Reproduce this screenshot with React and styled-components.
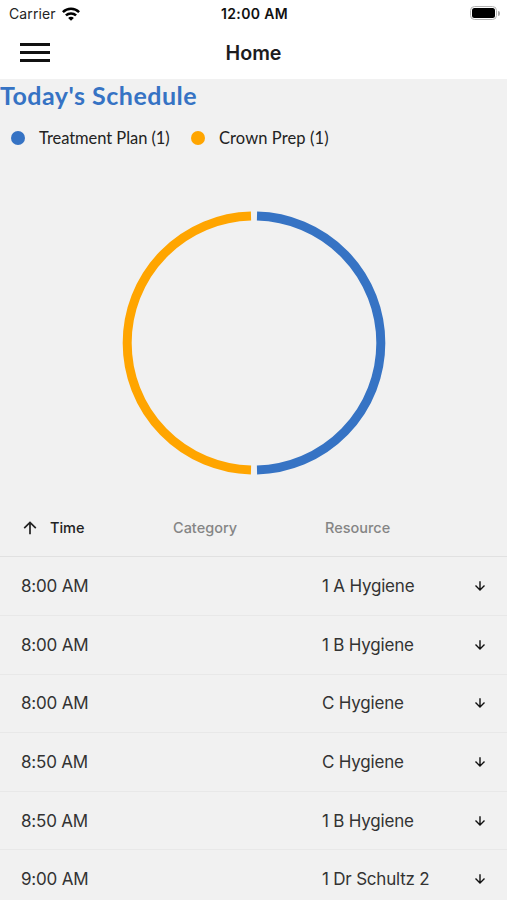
import styled, { createGlobalStyle } from "styled-components";

const appointments = [
    { id: 1, time: "8:00 AM", resource: "1 A Hygiene" },
    { id: 2, time: "8:00 AM", resource: "1 B Hygiene" },
    { id: 3, time: "8:00 AM", resource: "C Hygiene" },
    { id: 4, time: "8:50 AM", resource: "C Hygiene" },
    { id: 5, time: "8:50 AM", resource: "1 B Hygiene" },
    { id: 6, time: "9:00 AM", resource: "1 Dr Schultz 2" },
];

const WifiIcon = () => (
    <svg width="18" height="14" viewBox="0 0 18 14" fill="none" stroke="#000" strokeWidth="2.5">
        <path d="M0.9 5.1C5.4 0.7 12.6 0.7 17.1 5.1" />
        <path d="M3.9 8.4C6.7 5.7 11.3 5.7 14.1 8.4" />
        <path d="M6.1 10.9C7.7 9.3 10.3 9.3 11.9 10.9L9 13.8Z" fill="#000" stroke="none" />
    </svg>
);

const ArrowUp = () => (
    <svg width="14" height="14" viewBox="0 0 14 14" fill="none" stroke="#222" strokeWidth="1.7">
        <path d="M7 13.2V1.6M1.2 7.2L7 1.4L12.8 7.2" />
    </svg>
);

const ArrowDown = () => (
    <svg width="10" height="10" viewBox="0 0 10 10" fill="none" stroke="#111" strokeWidth="1.4">
        <path d="M5 0.3V8.7M0.5 4.6L5 9L9.5 4.6" />
    </svg>
);

const Chart = () => (
    <svg width="264" height="264" viewBox="0 0 264 264" fill="none" strokeWidth="9">
        <path d="M135 5.04A127 127 0 0 1 135 258.96" stroke="#3673c4" />
        <path d="M129 5.04A127 127 0 0 0 129 258.96" stroke="#ffa500" />
    </svg>
);

const App = () => {
    return (
        <Screen>
            <GlobalStyle />
            <StatusBar>
                <Carrier>
                    <CarrierName>Carrier</CarrierName>
                    <WifiIcon />
                </Carrier>
                <Clock>12:00 AM</Clock>
                <BatteryBox>
                    <Battery />
                    <BatteryTip />
                </BatteryBox>
            </StatusBar>
            <NavBar>
                <MenuButton aria-label="Menu">
                    <MenuLine />
                    <MenuLine />
                    <MenuLine />
                </MenuButton>
                <NavTitle>Home</NavTitle>
            </NavBar>
            <Heading>Today's Schedule</Heading>
            <Legend>
                <LegendItem $width="180px">
                    <Dot $color="#3673c4" />
                    <LegendText>Treatment Plan (1)</LegendText>
                </LegendItem>
                <LegendItem>
                    <Dot $color="#ffa500" />
                    <LegendText $spacing="0.1px">Crown Prep (1)</LegendText>
                </LegendItem>
            </Legend>
            <ChartBox>
                <Chart />
            </ChartBox>
            <HeaderRow>
                <HeaderCell $active>
                    <ArrowUp />
                    Time
                </HeaderCell>
                <HeaderCell>Category</HeaderCell>
                <HeaderCell>Resource</HeaderCell>
            </HeaderRow>
            {appointments.map((item) => (
                <Row key={item.id}>
                    <Cell>{item.time}</Cell>
                    <Cell>{item.resource}</Cell>
                    <ArrowDown />
                </Row>
            ))}
        </Screen>
    )
};

export default App;

const GlobalStyle = createGlobalStyle`
  * {
    box-sizing: border-box;
  }
  body {
    margin: 0;
    background-color: #f1f1f1;
    overflow: hidden;
  }
`;

const Screen = styled.div`
  height: 900px;
  overflow: hidden;
  background-color: #f1f1f1;
  color: #242424;
  font-family: Inter, "Liberation Sans", sans-serif;
`;

const StatusBar = styled.div`
  display: grid;
  grid-template-columns: 1fr auto 1fr;
  align-items: center;
  height: 27px;
  padding: 0 7px 0 9px;
  background-color: #fff;
`;

const Carrier = styled.div`
  display: flex;
  align-items: center;
  gap: 6px;
  height: 26px;
`;

const CarrierName = styled.span`
  font-size: 14px;
  line-height: 27px;
  letter-spacing: 0.1px;
`;

const Clock = styled.span`
  font-size: 14px;
  font-weight: 600;
  line-height: 27px;
  letter-spacing: 0.35px;
  color: #111;
`;

const BatteryBox = styled.div`
  display: flex;
  align-items: center;
  justify-content: flex-end;
  gap: 1px;
  padding-bottom: 1px;
`;

const Battery = styled.div`
  width: 27px;
  height: 14px;
  border: 1.5px solid #b4b4b4;
  border-radius: 4.5px;
  background-color: #000;
  background-clip: content-box;
  padding: 1px;
`;

const BatteryTip = styled.div`
  width: 2px;
  height: 5px;
  border-radius: 0 2px 2px 0;
  background-color: #aaa;
`;

const NavBar = styled.div`
  display: grid;
  grid-template-columns: 1fr auto 1fr;
  align-items: center;
  height: 52px;
  padding: 0 20px 1px;
  background-color: #fff;
`;

const MenuButton = styled.button`
  display: flex;
  flex-direction: column;
  gap: 5px;
  width: 30px;
  padding: 0 0 1px;
  border: none;
  background: none;
`;

const MenuLine = styled.span`
  height: 3px;
  background-color: #111;
`;

const NavTitle = styled.span`
  font-size: 19.7px;
  font-weight: 600;
  color: #1c1c1e;
`;

const Heading = styled.h1`
  margin: 0;
  height: 36px;
  font-family: Lato, sans-serif;
  font-size: 25px;
  font-weight: 700;
  line-height: 32px;
  letter-spacing: 0.5px;
  color: #3673c4;
`;

const Legend = styled.div`
  display: flex;
  align-items: center;
  height: 45px;
  padding-left: 11px;
`;

const LegendItem = styled.div`
  display: flex;
  align-items: center;
  gap: 14px;
  width: ${(props) => props.$width || "auto"};
`;

const Dot = styled.span`
  width: 14px;
  height: 14px;
  border-radius: 50%;
  background-color: ${(props) => props.$color};
`;

const LegendText = styled.span`
  font-family: Lato, sans-serif;
  font-size: 16.5px;
  line-height: 20px;
  letter-spacing: ${(props) => props.$spacing || "-0.05px"};
  color: #222;
`;

const ChartBox = styled.div`
  display: flex;
  justify-content: center;
  align-items: center;
  height: 339px;
  padding: 27px 0 0 1px;
`;

const HeaderRow = styled.div`
  display: grid;
  grid-template-columns: 150px 152px 1fr;
  align-items: center;
  height: 58.4px;
  padding-left: 23px;
  border-bottom: 1px solid #e1e1e1;
`;

const HeaderCell = styled.span`
  display: flex;
  align-items: center;
  gap: 13px;
  font-size: 14.5px;
  font-weight: 500;
  color: ${(props) => (props.$active ? "#222" : "#858585")};
`;

const Row = styled.div`
  display: grid;
  grid-template-columns: 301px 1fr auto;
  align-items: center;
  height: 58.6px;
  padding: 0 22px 0 21px;
  border-bottom: 1px solid #e8e8e8;
`;

const Cell = styled.span`
  font-size: 17px;
  letter-spacing: -0.2px;
  color: #333;
`;
